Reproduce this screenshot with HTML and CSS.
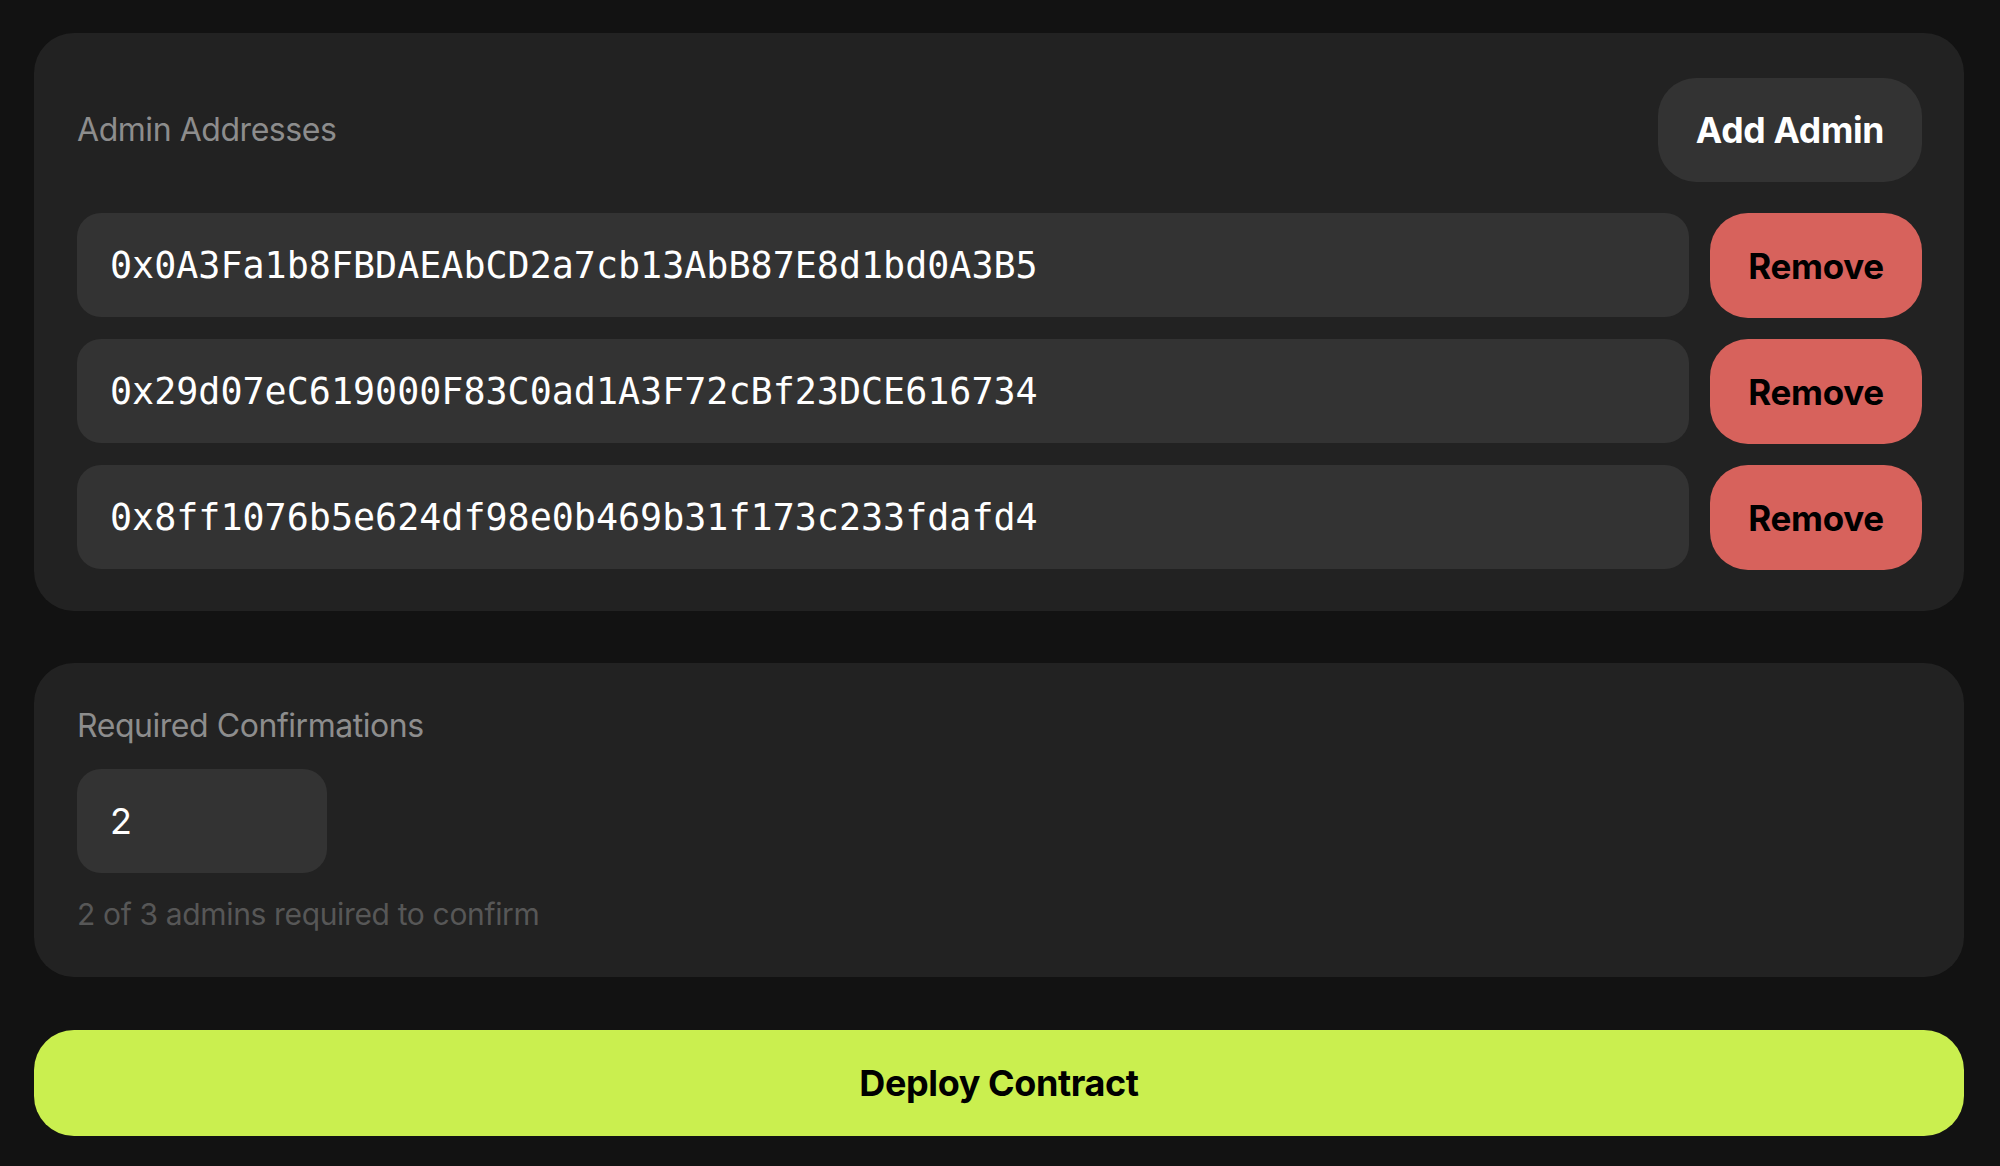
FILE: index.html
```html
<!DOCTYPE html>
<html lang="en">
<head>
<meta charset="utf-8">
<title>Multisig Setup</title>
<link rel="stylesheet" href="styles.css">
</head>
<body>
  <main class="page">
    <section class="card admins">
      <div class="admins-head">
        <span class="label">Admin Addresses</span>
        <button class="btn btn-add">Add Admin</button>
      </div>
      <div class="rows">
        <div class="row">
          <div class="field addr">0x0A3Fa1b8FBDAEAbCD2a7cb13AbB87E8d1bd0A3B5</div>
          <button class="btn btn-remove">Remove</button>
        </div>
        <div class="row">
          <div class="field addr">0x29d07eC619000F83C0ad1A3F72cBf23DCE616734</div>
          <button class="btn btn-remove">Remove</button>
        </div>
        <div class="row">
          <div class="field addr">0x8ff1076b5e624df98e0b469b31f173c233fdafd4</div>
          <button class="btn btn-remove">Remove</button>
        </div>
      </div>
    </section>

    <section class="card confirms">
      <span class="label">Required Confirmations</span>
      <div class="field num">2</div>
      <span class="hint">2 of 3 admins required to confirm</span>
    </section>

    <button class="btn btn-deploy">Deploy Contract</button>
  </main>
</body>
</html>
```

FILE: styles.css
```css
* { box-sizing: border-box; }

html, body {
  margin: 0;
  background: #121212;
}

body {
  font-family: Inter, "Noto Sans", sans-serif;
  color: #fff;
}

.page {
  padding: 33px 36px 0 34px;
  display: flex;
  flex-direction: column;
}

.card {
  background: #222222;
  border-radius: 40px;
}

.admins {
  padding: 45px 42px 41px 43px;
}

.admins-head {
  display: flex;
  justify-content: space-between;
  align-items: center;
  margin-bottom: 31px;
}

.label {
  display: block;
  font-size: 32px;
  line-height: 36px;
  color: #8d8d8d;
  letter-spacing: -0.45px;
}

.btn {
  border: none;
  font-family: Inter, "Noto Sans", sans-serif;
  font-weight: 700;
  cursor: pointer;
  padding: 0;
}

.btn-add {
  width: 264px;
  height: 104px;
  border-radius: 38px;
  background: #333333;
  color: #fff;
  font-size: 35.5px;
  letter-spacing: -0.3px;
}

.rows {
  display: flex;
  flex-direction: column;
  gap: 21px;
}

.row {
  display: flex;
  gap: 21px;
}

.field {
  background: #333333;
  border-radius: 24px;
  display: flex;
  align-items: center;
  padding-left: 33px;
  height: 104px;
  color: #fff;
}

.addr {
  flex: 1;
  font-family: "DejaVu Sans Mono", "Liberation Mono", monospace;
  font-size: 36.7px;
}

.btn-remove {
  width: 212px;
  height: 105px;
  border-radius: 38px;
  background: #d7625c;
  color: #000;
  font-size: 35px;
  letter-spacing: -0.3px;
}

.confirms {
  margin-top: 52px;
  padding: 45px 43px 45px 43px;
  display: flex;
  flex-direction: column;
  align-items: flex-start;
}

.num {
  margin-top: 25px;
  width: 250px;
  font-size: 36px;
  font-family: Inter, "Noto Sans", sans-serif;
}

.hint {
  margin-top: 23px;
  font-size: 30px;
  line-height: 36px;
  color: #575757;
  letter-spacing: -0.35px;
}

.btn-deploy {
  margin-top: 53px;
  height: 106px;
  border-radius: 40px;
  background: #caef4f;
  color: #000;
  font-size: 36px;
  letter-spacing: -0.4px;
}
```
